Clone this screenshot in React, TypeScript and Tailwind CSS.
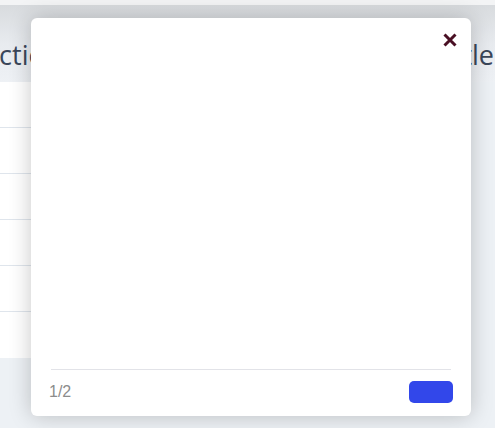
import React from "react";

export default function App() {
  const rows = [0, 1, 2, 3, 4, 5];
  return (
    <div className="relative w-[495px] h-[428px] overflow-hidden bg-[#edf1f5]" style={{ fontFamily: '"Open Sans", "Noto Sans", sans-serif' }}>
      <div className="h-[5px] bg-[#f3f4f5]" />
      <div className="h-[77px] bg-gradient-to-b from-[#d8dbde] via-[#e8ebef] to-[#eef1f5] flex items-end pb-[14px]">
        <span className="ml-[-18px] text-[27px] leading-none text-[#3a4659]">Action</span>
        <span className="ml-auto mr-[1px] text-[27px] leading-none text-[#3a4659]">Title</span>
      </div>
      <div className="flex w-[471px] flex-col">
        {rows.map((r) => (
          <div key={r} className={`h-[46px] bg-white ${r < 5 ? "border-b border-[#dfe5ec]" : ""}`} />
        ))}
      </div>

      <div className="absolute left-[31px] top-[18px] w-[440px] h-[398px] bg-white rounded-[6px] shadow-[0_0_22px_rgba(0,0,0,0.22)] flex flex-col px-[20px]">
        <div className="flex justify-end pt-[15px] mr-[-6px]">
          <svg width="14" height="14" viewBox="0 0 14 14">
            <path d="M1.5 1.5 L12.5 12.5 M12.5 1.5 L1.5 12.5" stroke="#4a1024" strokeWidth="3" strokeLinecap="butt" />
          </svg>
        </div>
        <div className="flex-1" />
        <div className="border-t border-[#e2e3e8] h-[47px] flex items-center justify-between">
          <span className="text-[16px] text-[#8c8c8c] ml-[-2px] mt-[-2px]" style={{ fontFamily: '"Liberation Sans", Arial, sans-serif' }}>1/2</span>
          <button className="w-[44px] h-[22px] rounded-[5px] bg-[#3247ea] mr-[-2px] mt-[-2px]" />
        </div>
      </div>
    </div>
  );
}
